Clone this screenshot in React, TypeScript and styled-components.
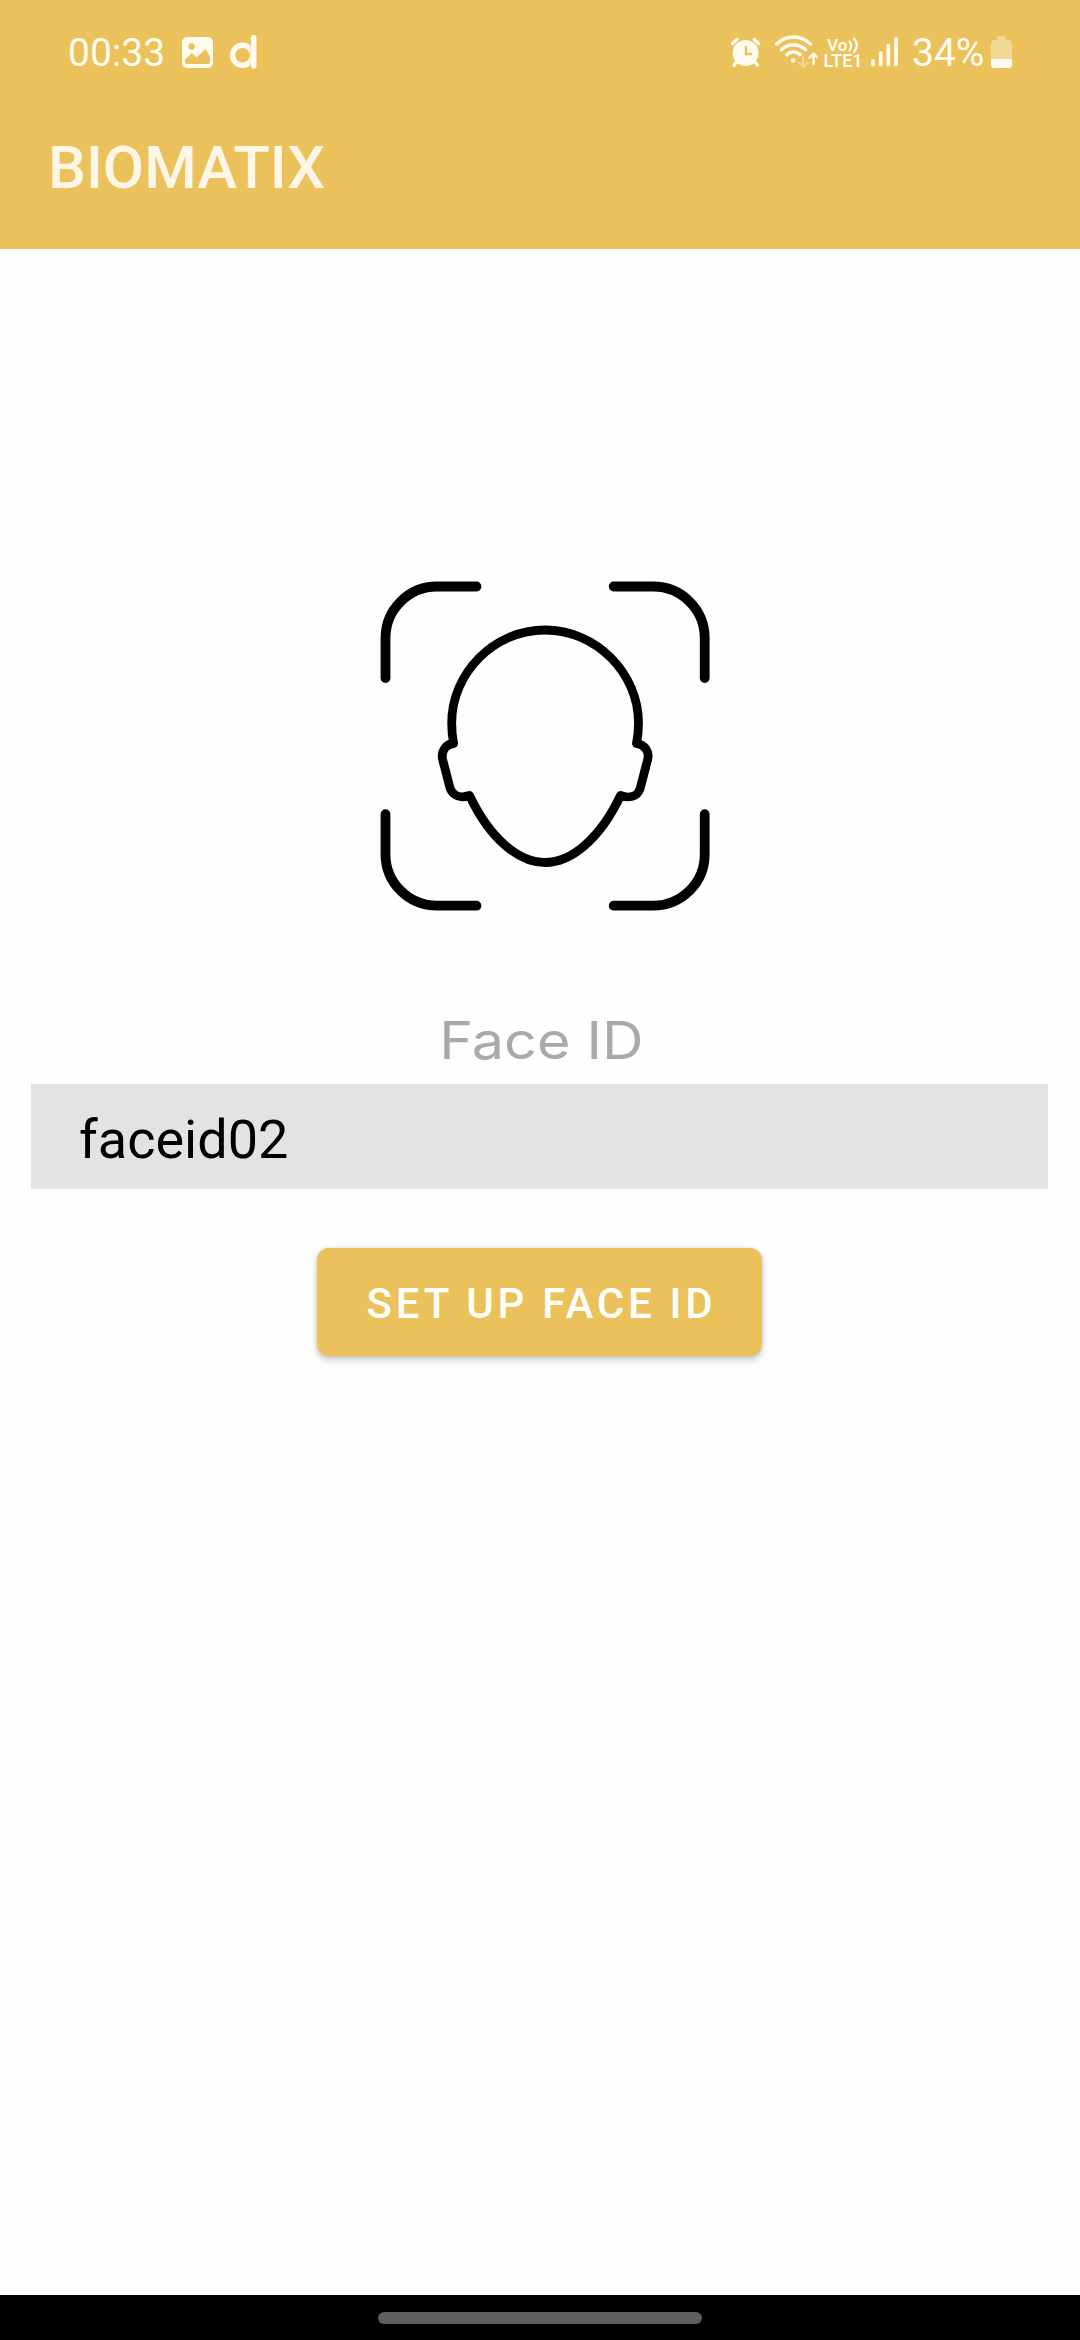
import React from "react";
import styled, { createGlobalStyle } from "styled-components";

const gold = "#eac15b";
const cream = "#fffbee";

const GlobalStyle = createGlobalStyle`
  body { margin: 0; background: #fefefe; font-family: Roboto, "Liberation Sans", sans-serif; }
  * { box-sizing: border-box; }
`;

const Screen = styled.div`
  width: 1080px;
  height: 2340px;
  display: flex;
  flex-direction: column;
  background: #fefefe;
`;

const Header = styled.header`
  height: 249px;
  background: ${gold};
`;

const StatusBar = styled.div`
  height: 104px;
  display: flex;
  align-items: center;
  padding: 0 67px 0 68px;
  color: ${cream};
`;

const Glyph = styled.svg<{ $gap?: number }>`
  display: block;
  flex: none;
  height: 36px;
  margin-left: ${(p) => p.$gap ?? 0}px;
`;

const StatusText = styled.span<{ $width: number; $gap?: number }>`
  width: ${(p) => p.$width}px;
  margin-left: ${(p) => p.$gap ?? 0}px;
  padding-top: 2px;
  font-size: 39px;
  line-height: 46px;
  white-space: nowrap;
`;

const Spacer = styled.div`
  flex: 1;
`;

const Title = styled.h1`
  margin: 0;
  padding: 29px 0 0 48px;
  font-size: 60px;
  line-height: 70px;
  font-weight: 500;
  color: #fff6e8;
`;

const Content = styled.main`
  flex: 1;
  display: flex;
  flex-direction: column;
  align-items: center;
`;

const FaceArt = styled.svg`
  display: block;
  width: 370px;
  height: 370px;
  margin: 311px 0 0 10px;
`;

const Label = styled.div`
  margin-top: 76px;
  height: 78px;
  font-family: Inter, "Open Sans", sans-serif;
  font-size: 52px;
  font-weight: 440;
  line-height: 70px;
  color: #a9a9a9;
  transform: translateX(1px) scaleX(1.105);
`;

const Field = styled.input`
  display: block;
  width: 1017px;
  height: 105px;
  margin-right: 1px;
  padding: 6px 48px 0;
  border: 0;
  border-radius: 0;
  outline: 0;
  background: #e3e3e3;
  color: #000;
  font: 400 54px Roboto, sans-serif;
`;

const Button = styled.button`
  width: 445px;
  height: 108px;
  margin: 59px 1px 0 0;
  padding: 2px 0 0 4px;
  border: 0;
  border-radius: 12px;
  background: ${gold};
  color: #fffefa;
  font: 500 42px Roboto, sans-serif;
  letter-spacing: 3.75px;
  white-space: nowrap;
  box-shadow: 0 4px 7px rgba(0, 0, 0, 0.2), 0 0 4px rgba(0, 0, 0, 0.1);
`;

const NavBar = styled.footer`
  height: 45px;
  display: flex;
  justify-content: center;
  padding-top: 17px;
  background: #000;
`;

const Pill = styled.div`
  width: 324px;
  height: 12px;
  border-radius: 6px;
  background: #5e5e5e;
`;

const ImageIcon = () => (
  <Glyph width="31" viewBox="182 34 31 36" $gap={16}>
    <rect x="182" y="37" width="31" height="31" rx="5" fill={cream} />
    <circle cx="191.5" cy="46.5" r="3.2" fill={gold} />
    <path d="M185 59.5l7-6.5 4.5 4.5 9-8.5 4.5 7.5v5.5q0 2-2 2h-21q-2 0-2-2z" fill={gold} />
  </Glyph>
);

const LetterIcon = () => (
  <Glyph width="28" viewBox="230 34 28 36" $gap={17}>
    <circle cx="242.5" cy="55.3" r="10" fill="none" stroke={cream} strokeWidth="5.4" />
    <path d="M250.2 43v25" stroke={gold} strokeWidth="1" opacity="0.5" />
    <path d="M253.7 37.7v28" stroke={cream} strokeWidth="5.6" strokeLinecap="round" />
  </Glyph>
);

const AlarmIcon = () => (
  <Glyph width="32" viewBox="730 34 32 36">
    <circle cx="745.6" cy="53" r="13" fill={cream} />
    <path
      d="M732.6 43.6l4.4-4.2M758.6 43.6l-4.4-4.2M737 61.5l-3 3.6M754.5 61.5l3 3.6"
      stroke={cream}
      strokeWidth="3.4"
      strokeLinecap="round"
    />
    <path d="M746 46v8h6" fill="none" stroke={gold} strokeWidth="2.4" />
  </Glyph>
);

const WifiIcon = () => (
  <Glyph width="44" viewBox="774 34 44 36" $gap={12}>
    <g fill="none" stroke={cream} strokeWidth="3.4" strokeLinecap="round">
      <path d="M776.5 44c9.5-9.4 24.5-9.4 34 0" />
      <path d="M781.5 49.7c6.7-6.7 17.3-6.7 24 0" />
      <path d="M786.8 54.8c4-3.8 9.4-3.8 13.4 0" />
    </g>
    <circle cx="793.3" cy="60.5" r="2.3" fill={cream} />
    <g fill="none" strokeWidth="2.4" strokeLinecap="round" strokeLinejoin="round">
      <path d="M803.2 57v10M799.3 63l3.9 4 3.9-4" stroke={cream} opacity="0.4" />
      <path d="M813.6 64V54M809.7 57.5l3.9-4 3.9 4" stroke={cream} />
    </g>
  </Glyph>
);

const VolteIcon = () => (
  <Glyph width="40" viewBox="823 34 40 36" $gap={5}>
    <g fill={cream} fontFamily="Roboto, sans-serif" fontWeight="600">
      <text x="827" y="50.5" fontSize="17" textLength="20.5" lengthAdjust="spacingAndGlyphs">Vo</text>
      <text x="823.5" y="67" fontSize="18" textLength="39" lengthAdjust="spacingAndGlyphs">LTE1</text>
    </g>
    <path
      d="M849.5 41.5q3.3 4.5 0 9M854 38.5q6 7 0 13.5"
      fill="none"
      stroke={cream}
      strokeWidth="2.2"
      strokeLinecap="round"
    />
  </Glyph>
);

const SignalIcon = () => (
  <Glyph width="28" viewBox="871 34 28 36" $gap={8}>
    <path d="M873 61v3.5M880.7 53v11.5M888.3 45.5v19M896 39v25.5" stroke={cream} strokeWidth="3.8" strokeLinecap="round" />
  </Glyph>
);

const BatteryIcon = () => (
  <Glyph width="22" viewBox="991 34 22 36" $gap={7}>
    <path d="M991 59V44q0-4 4-4h2v-2.5q0-1.5 1.5-1.5h6q1.5 0 1.5 1.5V40h2q4 0 4 4v15z" fill={cream} opacity="0.4" />
    <path d="M991 59h21v6q0 3-3 3h-15q-3 0-3-3z" fill={cream} />
  </Glyph>
);

const CORNER = "M25.5 118V77.5A51.5 51.5 0 0 1 77 26.5H116.5";

const FaceScan = () => (
  <FaceArt viewBox="0 0 370 370" fill="none" stroke="#000" strokeLinecap="round" strokeLinejoin="round">
    <g strokeWidth="9.8">
      <path d={CORNER} />
      <path d={CORNER} transform="matrix(-1 0 0 1 370.2 0)" />
      <path d={CORNER} transform="matrix(1 0 0 -1 0 372.2)" />
      <path d={CORNER} transform="matrix(-1 0 0 -1 370.2 372.2)" />
    </g>
    <path
      strokeWidth="8.8"
      d="M93.6 183.5C92.3 177 91.7 170 91.7 163C91.7 113 134 70 185.1 70C236 70 278.5 113 278.5 163C278.5 170 277.9 177 276.5 183.5C285 184.5 289.5 192 287.8 199L280 229C277 237 269 238.5 260.5 235.5C240 279 211 302.5 185.1 302.5C159 302.5 130 279 109.5 235.5C101 238.5 93 236 90 228L82.5 199C81 191 86 184 93.6 183.5Z"
    />
  </FaceArt>
);

export default function App() {
  const [name, setName] = React.useState("faceid02");
  return (
    <>
      <GlobalStyle />
      <Screen>
        <Header>
          <StatusBar>
            <StatusText $width={98}>00:33</StatusText>
            <ImageIcon />
            <LetterIcon />
            <Spacer />
            <AlarmIcon />
            <WifiIcon />
            <VolteIcon />
            <SignalIcon />
            <StatusText $width={72} $gap={13}>34%</StatusText>
            <BatteryIcon />
          </StatusBar>
          <Title>BIOMATIX</Title>
        </Header>
        <Content>
          <FaceScan />
          <Label>Face ID</Label>
          <Field value={name} onChange={(e) => setName(e.target.value)} />
          <Button>SET UP FACE ID</Button>
        </Content>
        <NavBar>
          <Pill />
        </NavBar>
      </Screen>
    </>
  );
}
